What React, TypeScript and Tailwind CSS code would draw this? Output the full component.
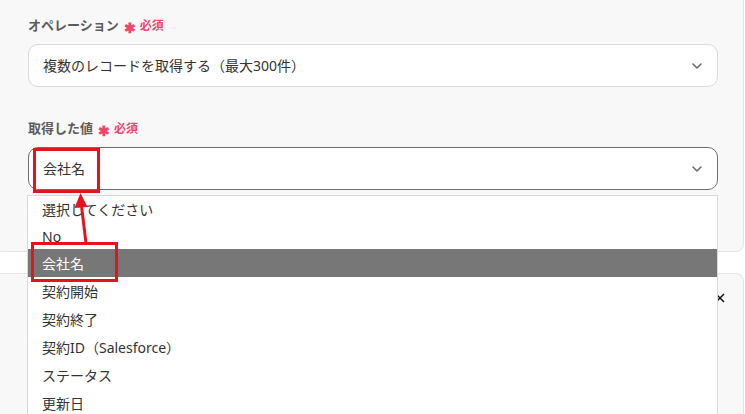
import React from "react";

// Options shown in the open dropdown
const options = [
  "選択してください",
  "No",
  "会社名",
  "契約開始",
  "契約終了",
  "契約ID（Salesforce）",
  "ステータス",
  "更新日",
];

const Chevron = () => (
  <svg width="10" height="6" viewBox="0 0 10 6" fill="none" className="shrink-0">
    <path d="M1 1l4 4 4-4" stroke="#6b6b6b" strokeWidth="1.6" strokeLinecap="round" strokeLinejoin="round" />
  </svg>
);

const Label: React.FC<{ text: string }> = ({ text }) => (
  <div className="flex items-center h-[20px] gap-[5px]">
    <span className="text-[13px] font-bold text-[#5c5c5c]">{text}</span>
    <span className="text-[12px] font-bold text-[#f0456b] flex items-center gap-[4px]">
      <span className="text-[14px] leading-none mt-[3px]">✱</span>
      <span>必須</span>
    </span>
  </div>
);

const Select: React.FC<{ value: string; focused?: boolean }> = ({ value, focused }) => (
  <div
    className={
      focused
        ? "h-[43px] w-[690px] bg-white rounded-[10px] border border-[#6e6e6e] flex items-center justify-between pl-[14px] pr-[15px]"
        : "h-[43px] w-[690px] bg-white rounded-[10px] border border-[#d7d9de] flex items-center justify-between pl-[14px] pr-[15px]"
    }
  >
    <span className="text-[14px] text-[#333333]">{value}</span>
    <Chevron />
  </div>
);

export default function App() {
  return (
    <div
      className="relative w-[745px] h-[414px] overflow-hidden bg-white"
      style={{ fontFamily: '"Noto Sans", "Noto Sans CJK JP", sans-serif' }}
    >
      {/* upper settings card */}
      <div className="h-[252px] ml-[-6px] mr-[1px] bg-[#f8f8f9] border-b border-x border-[#e4e4e6] rounded-b-[8px] pl-[33px] pt-[16px] flex flex-col">
        <Label text="オペレーション" />
        <div className="mt-[8px]">
          <Select value="複数のレコードを取得する（最大300件）" />
        </div>
        <div className="mt-[32px]">
          <Label text="取得した値" />
        </div>
        <div className="mt-[8px]">
          <Select value="会社名" focused />
        </div>
      </div>

      {/* lower card */}
      <div className="mt-[21px] h-[200px] ml-[-6px] mr-[1px] bg-[#f8f8f9] border-t border-x border-[#e4e4e6] rounded-t-[8px] flex justify-end pr-[18px] pt-[19px]">
        <svg width="10" height="10" viewBox="0 0 10 10">
          <path d="M1 1l8 8M9 1l-8 8" stroke="#111" strokeWidth="1.5" />
        </svg>
      </div>

      {/* open option list */}
      <div className="absolute left-[27px] top-[195px] w-[691px] h-[230px] bg-white border border-[#d9d9d9]">
        {options.map((o, i) => (
          <div
            key={o}
            className={
              i === 2
                ? "h-[28px] leading-[28px] pt-[1px] pl-[14px] text-[14px] bg-[#777777] text-white"
                : i < 2
                  ? "h-[26.5px] leading-[26.5px] pt-[1px] pl-[14px] text-[14px] text-[#333333]"
                  : "h-[28px] leading-[28px] pt-[1px] pl-[14px] text-[14px] text-[#333333]"
            }
          >
            {o}
          </div>
        ))}
      </div>

      {/* annotation boxes and arrow */}
      <div className="absolute left-[33px] top-[148px] w-[67px] h-[45px] border-[3px] border-[#e3141d]" />
      <div className="absolute left-[31px] top-[242px] w-[87px] h-[40px] border-[3px] border-[#e3141d]" />
      <svg className="absolute left-0 top-0 pointer-events-none" width="745" height="414">
        <line x1="86" y1="243" x2="81.5" y2="206" stroke="#e3141d" strokeWidth="3" />
        <polygon points="80.5,193 74.5,208 87.5,207" fill="#e3141d" />
      </svg>
    </div>
  );
}
